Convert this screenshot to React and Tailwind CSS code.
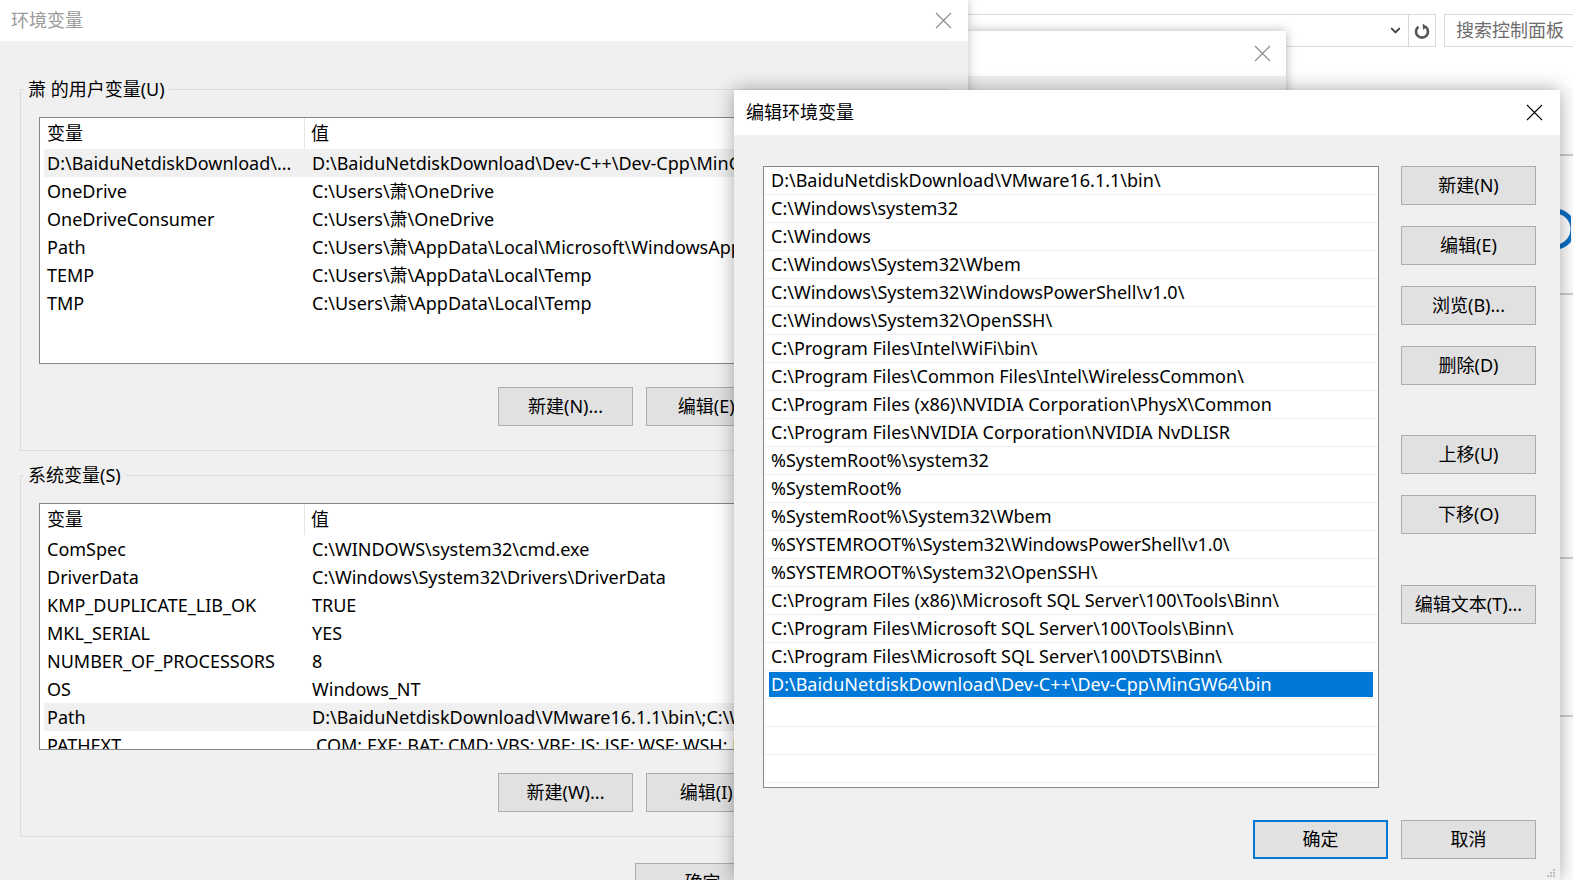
import { ChevronDown } from 'lucide-react';

const font = "font-['Noto_Sans','Noto_Sans_CJK_SC',sans-serif]";

const userVars = [
  ['D:\\BaiduNetdiskDownload\\...', 'D:\\BaiduNetdiskDownload\\Dev-C++\\Dev-Cpp\\MinGW64\\bin'],
  ['OneDrive', 'C:\\Users\\萧\\OneDrive'],
  ['OneDriveConsumer', 'C:\\Users\\萧\\OneDrive'],
  ['Path', 'C:\\Users\\萧\\AppData\\Local\\Microsoft\\WindowsApps;'],
  ['TEMP', 'C:\\Users\\萧\\AppData\\Local\\Temp'],
  ['TMP', 'C:\\Users\\萧\\AppData\\Local\\Temp'],
];

const sysVars = [
  ['ComSpec', 'C:\\WINDOWS\\system32\\cmd.exe'],
  ['DriverData', 'C:\\Windows\\System32\\Drivers\\DriverData'],
  ['KMP_DUPLICATE_LIB_OK', 'TRUE'],
  ['MKL_SERIAL', 'YES'],
  ['NUMBER_OF_PROCESSORS', '8'],
  ['OS', 'Windows_NT'],
  ['Path', 'D:\\BaiduNetdiskDownload\\VMware16.1.1\\bin\\;C:\\Windows\\system32;C:\\Windows'],
  ['PATHEXT', '.COM;.EXE;.BAT;.CMD;.VBS;.VBE;.JS;.JSE;.WSF;.WSH;.MSC'],
];

const paths = [
  'D:\\BaiduNetdiskDownload\\VMware16.1.1\\bin\\',
  'C:\\Windows\\system32',
  'C:\\Windows',
  'C:\\Windows\\System32\\Wbem',
  'C:\\Windows\\System32\\WindowsPowerShell\\v1.0\\',
  'C:\\Windows\\System32\\OpenSSH\\',
  'C:\\Program Files\\Intel\\WiFi\\bin\\',
  'C:\\Program Files\\Common Files\\Intel\\WirelessCommon\\',
  'C:\\Program Files (x86)\\NVIDIA Corporation\\PhysX\\Common',
  'C:\\Program Files\\NVIDIA Corporation\\NVIDIA NvDLISR',
  '%SystemRoot%\\system32',
  '%SystemRoot%',
  '%SystemRoot%\\System32\\Wbem',
  '%SYSTEMROOT%\\System32\\WindowsPowerShell\\v1.0\\',
  '%SYSTEMROOT%\\System32\\OpenSSH\\',
  'C:\\Program Files (x86)\\Microsoft SQL Server\\100\\Tools\\Binn\\',
  'C:\\Program Files\\Microsoft SQL Server\\100\\Tools\\Binn\\',
  'C:\\Program Files\\Microsoft SQL Server\\100\\DTS\\Binn\\',
  'D:\\BaiduNetdiskDownload\\Dev-C++\\Dev-Cpp\\MinGW64\\bin',
  '',
  '',
  '',
];

function CloseX({ className = '' }) {
  return (
    <svg width="17" height="17" viewBox="0 0 17 17" className={className}>
      <path d="M1 1L16 16M16 1L1 16" stroke="currentColor" strokeWidth="1.1" fill="none" />
    </svg>
  );
}

function Btn({ children, primary }) {
  return (
    <div
      className={`w-[135px] h-[39px] shrink-0 flex items-center justify-center bg-[#e1e1e1] text-[18px] text-black ${primary ? 'border-2 border-[#0078d7]' : 'border border-[#adadad]'}`}>
      {children}
    </div>
  );
}

function VarGroup({ title, rows, selected, buttons }) {
  return (
    <fieldset className="min-w-0 border border-[#dcdcdc] px-[18px] pb-[24px]">
      <legend className="-ml-[15px] px-[4px] text-[18px] leading-[24px] text-black">{title}</legend>
      <div className="mt-[16px] h-[247px] bg-white border border-[#828790] overflow-hidden">
        <div className="flex h-[31px] text-[18px] text-black">
          <div className="w-[265px] shrink-0 pl-[7px] border-r border-[#e5e5e5] flex items-center">变量</div>
          <div className="pl-[6px] flex items-center">值</div>
        </div>
        {rows.map(([k, v], i) => (
          <div key={i}
            className={`flex h-[28px] items-center ml-[4px] text-[18px] text-black whitespace-nowrap ${i === selected ? 'bg-[#f0f0f0]' : ''}`}>
            <div className="w-[265px] shrink-0 pl-[3px] overflow-hidden">{k}</div>
            <div className="pl-[3px]">{v}</div>
          </div>
        ))}
      </div>
      <div className="flex justify-end gap-[13px] mt-[23px]">
        {buttons.map(b => <Btn key={b}>{b}</Btn>)}
      </div>
    </fieldset>
  );
}

function EnvWindow() {
  return (
    <div className="absolute left-0 top-0 w-[968px] h-[880px] overflow-hidden bg-[#f0f0f0] shadow-[0_0_10px_rgba(0,0,0,0.25)] flex flex-col">
      <div className="h-[41px] shrink-0 bg-white flex items-center justify-between pl-[11px] pr-[16px]">
        <span className="text-[18px] text-[#9a9a9a]">环境变量</span>
        <CloseX className="text-[#8a8a8a]" />
      </div>
      <div className="px-[20px] pt-[36px] flex flex-col gap-[12px]">
        <VarGroup title="萧 的用户变量(U)" rows={userVars} selected={0} buttons={['新建(N)...', '编辑(E)...', '删除(D)']} />
        <VarGroup title="系统变量(S)" rows={sysVars} selected={6} buttons={['新建(W)...', '编辑(I)...', '删除(L)']} />
      </div>
      <div className="flex justify-end gap-[13px] pr-[50px] mt-[26px]">
        <Btn>确定</Btn>
        <Btn>取消</Btn>
      </div>
    </div>
  );
}

function SysPropsWindow() {
  return (
    <div className="absolute left-[968px] top-[31px] w-[318px] h-[400px] bg-[#f0f0f0] shadow-[0_0_10px_rgba(0,0,0,0.3)] flex flex-col">
      <div className="h-[45px] bg-white flex items-center justify-end pr-[15px]">
        <CloseX className="text-[#8a8a8a]" />
      </div>
    </div>
  );
}

function EditWindow() {
  const sideButtons = [
    ['新建(N)', 'mt-0'],
    ['编辑(E)', 'mt-[21px]'],
    ['浏览(B)...', 'mt-[21px]'],
    ['删除(D)', 'mt-[21px]'],
    ['上移(U)', 'mt-[50px]'],
    ['下移(O)', 'mt-[21px]'],
    ['编辑文本(T)...', 'mt-[51px]'],
  ];
  return (
    <div className="absolute left-[734px] top-[90px] w-[826px] h-[790px] bg-[#f0f0f0] shadow-[0_0_18px_rgba(0,0,0,0.35)] flex flex-col">
      <div className="h-[45px] shrink-0 bg-white flex items-center justify-between pl-[12px] pr-[17px]">
        <span className="text-[18px] text-black">编辑环境变量</span>
        <CloseX className="text-black" />
      </div>
      <div className="flex pl-[29px] pt-[31px]">
        <div className="w-[616px] h-[622px] shrink-0 bg-white border border-[#828790] overflow-hidden">
          {paths.map((p, i) => (
            <div key={i} className="h-[28px] border-b border-[#efefef] px-[5px] py-[1px]">
              <div className={`h-full flex items-center pl-[2px] text-[18px] whitespace-nowrap ${i === 18 ? 'bg-[#0078d7] text-white' : 'text-black'}`}>
                {p}
              </div>
            </div>
          ))}
        </div>
        <div className="ml-[22px] flex flex-col">
          {sideButtons.map(([b, m]) => (
            <div key={b} className={m}>
              <Btn>{b}</Btn>
            </div>
          ))}
        </div>
      </div>
      <div className="flex justify-end gap-[13px] pr-[24px] mt-[32px]">
        <Btn primary>确定</Btn>
        <Btn>取消</Btn>
      </div>
      <svg width="10" height="10" viewBox="0 0 10 10" className="absolute right-[4px] bottom-[2px]">
        <rect x="7" y="1" width="2" height="2" fill="#bdbdbd" />
        <rect x="4" y="4" width="2" height="2" fill="#bdbdbd" />
        <rect x="7" y="4" width="2" height="2" fill="#bdbdbd" />
        <rect x="1" y="7" width="2" height="2" fill="#bdbdbd" />
        <rect x="4" y="7" width="2" height="2" fill="#bdbdbd" />
        <rect x="7" y="7" width="2" height="2" fill="#bdbdbd" />
      </svg>
    </div>
  );
}

function ControlPanelBg() {
  return (
    <>
      <div className="absolute left-[940px] top-[14px] w-[496px] h-[33px] border border-[#d9d9d9] bg-white flex justify-end items-center">
        <ChevronDown size={15} strokeWidth={3.2} className="text-[#444] mr-[5px]" />
        <div className="h-full w-[27px] border-l border-[#d9d9d9] flex items-center justify-center">
          <svg width="16" height="18" viewBox="0 0 16 18">
            <path d="M4.5 4.8A6 6 0 1 0 11.5 4.8" stroke="#555" strokeWidth="2.6" fill="none" />
            <path d="M8.5 1.5L12.8 4.6L9.2 8Z" fill="#555" />
          </svg>
        </div>
      </div>
      <div className="absolute left-[1444px] top-[14px] w-[129px] h-[33px] border border-r-0 border-[#d9d9d9] bg-white flex items-center pl-[11px]">
        <span className="text-[18px] text-[#6d6d6d] whitespace-nowrap">搜索控制面板</span>
      </div>
      <div className="absolute left-[1558px] top-[154px] w-[15px] h-[2px] bg-[#cfcfcf]" />
      <div className="absolute left-[1558px] top-[293px] w-[15px] h-[2px] bg-[#cfcfcf]" />
      <div className="absolute left-[1558px] top-[557px] w-[15px] h-[2px] bg-[#cfcfcf]" />
      <div className="absolute left-[1558px] top-[715px] w-[15px] h-[2px] bg-[#cfcfcf]" />
      <svg width="20" height="44" viewBox="0 0 20 44" className="absolute left-[1551px] top-[207px]">
        <path d="M4 4A18 18 0 0 1 4 40" stroke="#0a6fc2" strokeWidth="5" fill="none" />
      </svg>
    </>
  );
}

export default function App() {
  return (
    <div className={`fixed inset-0 overflow-hidden bg-white ${font}`}>
      <ControlPanelBg />
      <SysPropsWindow />
      <EnvWindow />
      <EditWindow />
    </div>
  );
}
